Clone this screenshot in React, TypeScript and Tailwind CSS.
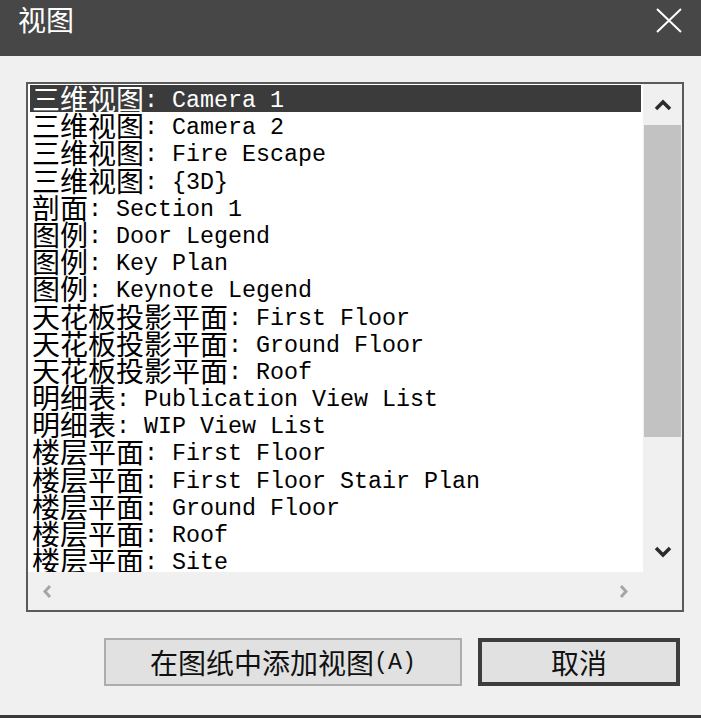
import { useState } from 'react';

type View = { kind: string; name: string };

const VIEWS: View[] = [
  { kind: '三维视图', name: 'Camera 1' },
  { kind: '三维视图', name: 'Camera 2' },
  { kind: '三维视图', name: 'Fire Escape' },
  { kind: '三维视图', name: '{3D}' },
  { kind: '剖面', name: 'Section 1' },
  { kind: '图例', name: 'Door Legend' },
  { kind: '图例', name: 'Key Plan' },
  { kind: '图例', name: 'Keynote Legend' },
  { kind: '天花板投影平面', name: 'First Floor' },
  { kind: '天花板投影平面', name: 'Ground Floor' },
  { kind: '天花板投影平面', name: 'Roof' },
  { kind: '明细表', name: 'Publication View List' },
  { kind: '明细表', name: 'WIP View List' },
  { kind: '楼层平面', name: 'First Floor' },
  { kind: '楼层平面', name: 'First Floor Stair Plan' },
  { kind: '楼层平面', name: 'Ground Floor' },
  { kind: '楼层平面', name: 'Roof' },
  { kind: '楼层平面', name: 'Site' }
];

const CJK = "font-['Noto_Sans_CJK_SC',sans-serif]";
const MONO = "font-['Liberation_Mono','Noto_Sans_CJK_SC',monospace]";

export default function App() {
  const [selected, setSelected] = useState(0);

  return (
    <div className="w-[701px] h-[718px] bg-[#f0f0f0] flex flex-col overflow-hidden">
      {/* title bar */}
      <div className="h-[56px] shrink-0 bg-[#474747] flex items-start justify-between pl-[18px] pr-[18px]">
        <span className={`${CJK} mt-[5px] text-[28px] leading-[28px] text-white`}>视图</span>
        <svg width="28" height="28" viewBox="0 0 28 28" className="mt-[6px]">
          <path d="M2 3 L26 26 M26 3 L2 26" stroke="#ffffff" strokeWidth="2" fill="none" />
        </svg>
      </div>

      {/* list box */}
      <div className="ml-[26px] mt-[26px] w-[658px] h-[530px] border-2 border-[#5a5a5a] flex flex-col">
        <div className="flex h-[488px]">
          <div className="w-[615px] bg-white pl-[2px] pr-[2px] pt-[1px] overflow-hidden">
            {VIEWS.map((v, i) => (
              <Row
                key={i}
                view={v}
                active={i === selected}
                onClick={() => setSelected(i)}
              />
            ))}
          </div>
          <div className="w-[39px] flex flex-col">
            <div className="h-[41px] flex items-center justify-center">
              <Chevron dir="up" />
            </div>
            <div className="flex-1 px-[1px]">
              <div className="h-[312px] bg-[#c2c2c2]" />
            </div>
            <div className="h-[41px] flex items-center justify-center">
              <Chevron dir="down" />
            </div>
          </div>
        </div>
        <div className="flex-1 flex">
          <div className="w-[615px] flex items-center justify-between">
            <div className="w-[39px] flex justify-center">
              <SideChevron dir="left" />
            </div>
            <div className="w-[39px] flex justify-center">
              <SideChevron dir="right" />
            </div>
          </div>
        </div>
      </div>

      {/* buttons */}
      <div className="mt-[26px] flex justify-end gap-[16px] pr-[21px]">
        <button className="w-[358px] h-[48px] border-2 border-[#adadad] bg-[#e1e1e1] flex items-center justify-center text-[#111]">
          <span className={`${CJK} text-[28px] leading-[28px]`}>在图纸中添加视图</span>
          <span className={`${MONO} text-[23.33px] leading-[28px] mt-[2px]`}>(A)</span>
        </button>
        <button className="w-[202px] h-[48px] border-4 border-[#3d3d3d] bg-[#e1e1e1] flex items-center justify-center text-[#111]">
          <span className={`${CJK} text-[28px] leading-[28px]`}>取消</span>
        </button>
      </div>

      <div className="mt-auto h-[3px] bg-[#3a3a3a]" />
    </div>
  );
}

function Row({ view, active, onClick }: { view: View; active: boolean; onClick: () => void }) {
  return (
    <div
      onClick={onClick}
      className={[
        'h-[27.2px] flex items-start whitespace-pre pl-[2px] cursor-default',
        active ? 'bg-[#3b3b3b] text-white' : 'text-black'
      ].join(' ')}
    >
      <span className={`${CJK} text-[28px] leading-[27.2px]`}>{view.kind}</span>
      <span className={`${MONO} text-[23.33px] leading-[27.2px] mt-[3px]`}>{': ' + view.name}</span>
    </div>
  );
}

function Chevron({ dir }: { dir: 'up' | 'down' }) {
  return (
    <svg width="18" height="12" viewBox="0 0 18 12">
      <polyline
        points={dir === 'up' ? '2,10 9,3 16,10' : '2,2 9,9 16,2'}
        stroke="#2b2b2b"
        strokeWidth="3.5"
        fill="none"
      />
    </svg>
  );
}

function SideChevron({ dir }: { dir: 'left' | 'right' }) {
  return (
    <svg width="11" height="15" viewBox="0 0 11 15">
      <polyline
        points={dir === 'left' ? '8,2 3,7.5 8,13' : '3,2 8,7.5 3,13'}
        stroke="#a6a6a6"
        strokeWidth="3"
        fill="none"
      />
    </svg>
  );
}
